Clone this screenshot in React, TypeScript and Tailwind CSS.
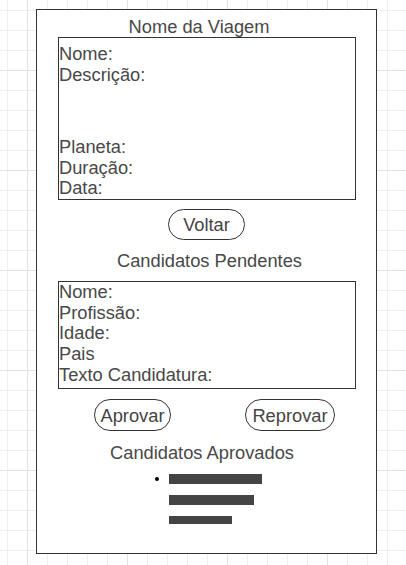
import React from 'react';

const font = { fontFamily: '"Liberation Sans", Arial, sans-serif' };

const Pill = ({ label, className }: { label: string; className: string }) => (
  <div
    className={
      'flex items-center justify-center rounded-full border border-[#333] text-[18.3px] leading-[21px] text-[#444] ' +
      className
    }
  >
    {label}
  </div>
);

export default function App() {
  return (
    <div
      style={font}
      className="w-[406px] h-[565px] overflow-hidden bg-white bg-[linear-gradient(to_right,#e2e2e2_1px,transparent_1px),linear-gradient(to_bottom,#e2e2e2_1px,transparent_1px),linear-gradient(to_right,#efefef_1px,transparent_1px),linear-gradient(to_bottom,#efefef_1px,transparent_1px)] bg-[size:100px_100px,100px_100px,20px_20px,20px_20px] bg-[position:27px_0,0_70px,7px_0,0_10px] pt-[9px] pl-[36px]"
    >
      <div className="flex flex-col w-[341px] h-[545px] border border-[#333] bg-white text-[#484848] text-[18.3px] leading-[21px]">
        {/* Viagem */}
        <div className="pt-[6px] pr-[15px] text-center">Nome da Viagem</div>
        <div className="ml-[21px] w-[298px] h-[163px] border border-[#333] flex flex-col justify-between pt-[6px] leading-[20.7px]">
          <div>
            <div>Nome:</div>
            <div>Descrição:</div>
          </div>
          <div>
            <div>Planeta:</div>
            <div>Duração:</div>
            <div>Data:</div>
          </div>
        </div>
        <div className="flex justify-center mt-[9px]">
          <Pill label="Voltar" className="w-[77px] h-[31px]" />
        </div>

        {/* Pendentes */}
        <div className="mt-[10px] pl-[6px] text-center">Candidatos Pendentes</div>
        <div className="mt-[10px] ml-[21px] w-[298px] h-[108px] border border-[#333] leading-[20.7px]">
          <div>Nome:</div>
          <div>Profissão:</div>
          <div>Idade:</div>
          <div>Pais</div>
          <div>Texto Candidatura:</div>
        </div>
        <div className="flex mt-[10px] ml-[57px] gap-[74px]">
          <Pill label="Aprovar" className="w-[77px] h-[32px]" />
          <Pill label="Reprovar" className="w-[90px] h-[32px]" />
        </div>

        {/* Aprovados */}
        <div className="mt-[11px] pr-[9px] text-center">Candidatos Aprovados</div>
        <div className="mt-[11px] ml-[118px] flex flex-col gap-[11px]">
          <div className="flex items-center">
            <span className="w-[4px] h-[4px] rounded-full bg-black" />
            <span className="ml-[10px] w-[93px] h-[10px] bg-[#444]" />
          </div>
          <div className="ml-[14px] w-[85px] h-[10px] bg-[#444]" />
          <div className="ml-[14px] w-[63px] h-[8px] bg-[#444]" />
        </div>
      </div>
    </div>
  );
}
